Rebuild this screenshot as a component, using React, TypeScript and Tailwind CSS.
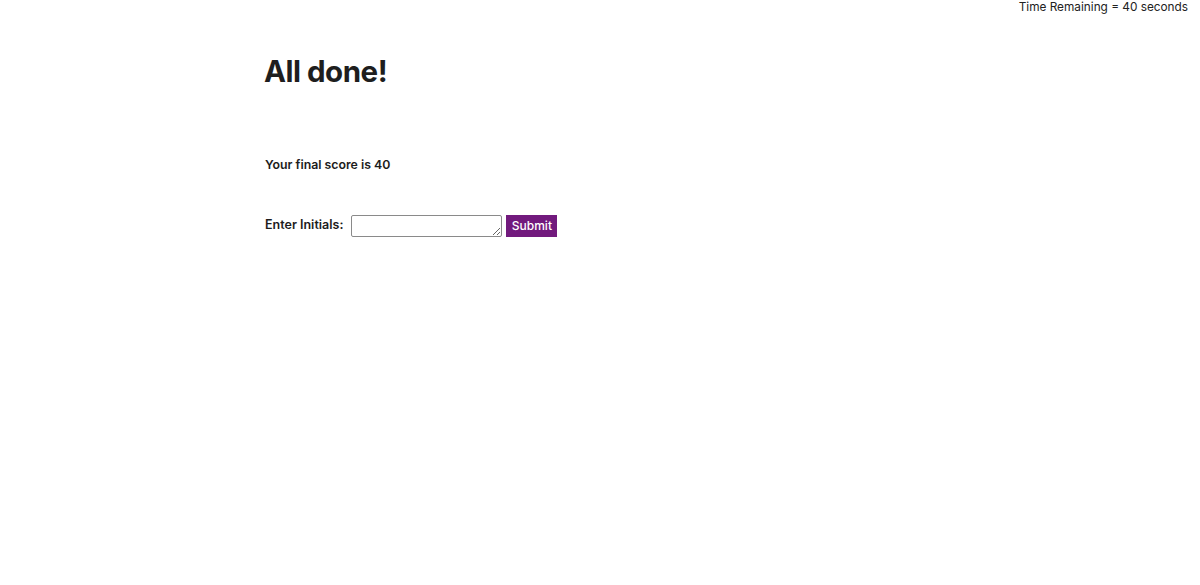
import React from "react";

export default function App() {
  return (
    <div className="w-[1200px] h-[585px] bg-white text-[#1c1c1c]" style={{ fontFamily: "Inter, 'Noto Sans', sans-serif" }}>
      <div className="flex justify-end pr-[12px] pt-0 text-[11.8px] leading-[15px] text-[#222]">
        Time Remaining = 40 seconds
      </div>
      <div className="pl-[264px] pt-[36px]">
        <h1 className="text-[29.5px] leading-[40px] font-bold tracking-[-0.5px] text-[#1e1e1e]">All done!</h1>
        <p className="mt-[66px] pl-[1px] text-[12.3px] leading-[16px] font-semibold">Your final score is 40</p>
        <div className="mt-[42px] pl-[1px] flex items-center">
          <label className="text-[12.5px] leading-[16px] font-semibold mr-[8px] -mt-[2px]">Enter Initials:</label>
          <textarea className="w-[151px] h-[22px] border border-[#8a8a8a] rounded-[2px] resize-y block text-[13px]" rows={1}></textarea>
          <button className="ml-[4px] w-[51px] h-[22px] bg-[#721a7d] text-white text-[12px] leading-[16px] font-medium">Submit</button>
        </div>
      </div>
    </div>
  );
}
